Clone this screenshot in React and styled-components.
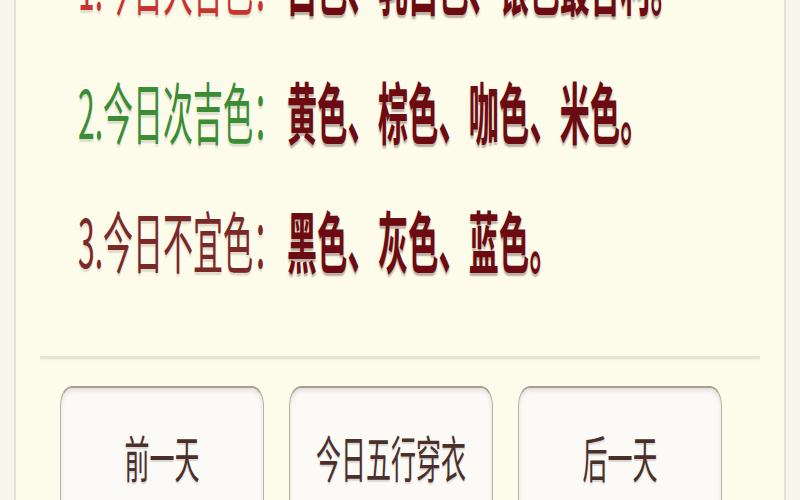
import React from 'react'
import styled, { createGlobalStyle } from 'styled-components'

const GlobalStyle = createGlobalStyle`
    html, body {
        margin: 0;
        padding: 0;
        height: 100%;
        overflow: hidden;
        background: #f7f5ec;
    }
    body {
        font-family: "Noto Sans CJK SC", "Noto Sans", sans-serif;
    }
`

const Page = styled.div`
    width: 800px;
    height: 500px;
    overflow: hidden;
    background: #f7f5ec;
`

const Card = styled.section`
    margin-left: 14px;
    width: 768px;
    height: 100%;
    background: #fdfbea;
    border-left: 2px solid #e4e1d5;
    border-right: 2px solid #e4e1d5;
    display: flex;
    flex-direction: column;
`

const ColorList = styled.ul`
    list-style: none;
    margin: -84px 0 0;
    padding: 0 0 0 62px;
`

const ColorRow = styled.li`
    height: 129px;
    display: flex;
    align-items: center;
`

const Line = styled.span`
    display: inline-block;
    font-size: 30px;
    line-height: 1;
    white-space: nowrap;
    transform: scaleY(2.25);
`

const labelTones = {
    best: '#c9352e',
    good: '#3a8c35',
    bad: '#7a2828',
}

const Label = styled.span`
    color: ${p => labelTones[p.tone]};
    font-weight: 400;
    margin-right: 4px;
    text-shadow: 0 1px 1px rgba(0, 0, 0, 0.12);
`

const Values = styled.span`
    color: #6c0b12;
    font-weight: 700;
    letter-spacing: 0.3px;
    text-shadow: 0 1px 1px rgba(40, 0, 0, 0.3);
`

const Divider = styled.hr`
    flex: none;
    margin: 53px 24px 0;
    height: 3px;
    border: 0;
    background: #e6e3d6;
    box-shadow: 0 1px 2px rgba(0, 0, 0, 0.06);
`

const ButtonRow = styled.nav`
    display: flex;
    gap: 25px;
    padding: 27px 0 0 44px;
`

const DayButton = styled.button`
    width: 204px;
    height: 138px;
    flex: none;
    display: flex;
    align-items: center;
    justify-content: center;
    background: #fcfaf6;
    border: 1px solid #b7b1a7;
    border-top: 2px solid #a79e90;
    border-bottom: 0;
    border-radius: 12px 12px 0 0 / 20px 20px 0 0;
    box-shadow: inset 0 3px 4px rgba(0, 0, 0, 0.1);
    padding: 0;
    font-family: inherit;
    cursor: pointer;
`

const ButtonText = styled.span`
    display: inline-block;
    font-size: 25px;
    color: #4a2f2b;
    text-shadow: 0 1px 1px rgba(0, 0, 0, 0.15);
    transform: scaleY(2);
`

const rows = [
    { tone: 'best', label: '1.今日大吉色：', values: '白色、乳白色、银色最吉利。' },
    { tone: 'good', label: '2.今日次吉色：', values: '黄色、棕色、咖色、米色。' },
    { tone: 'bad', label: '3.今日不宜色：', values: '黑色、灰色、蓝色。' },
]

const App = () => {
    return (
        <Page>
            <GlobalStyle />
            <Card>
                <ColorList>
                    {rows.map(row => (
                        <ColorRow key={row.label}>
                            <Line>
                                <Label tone={row.tone}>{row.label}</Label>
                                <Values>{row.values}</Values>
                            </Line>
                        </ColorRow>
                    ))}
                </ColorList>
                <Divider />
                <ButtonRow>
                    <DayButton><ButtonText>前一天</ButtonText></DayButton>
                    <DayButton><ButtonText>今日五行穿衣</ButtonText></DayButton>
                    <DayButton><ButtonText>后一天</ButtonText></DayButton>
                </ButtonRow>
            </Card>
        </Page>
    )
}

export default App
